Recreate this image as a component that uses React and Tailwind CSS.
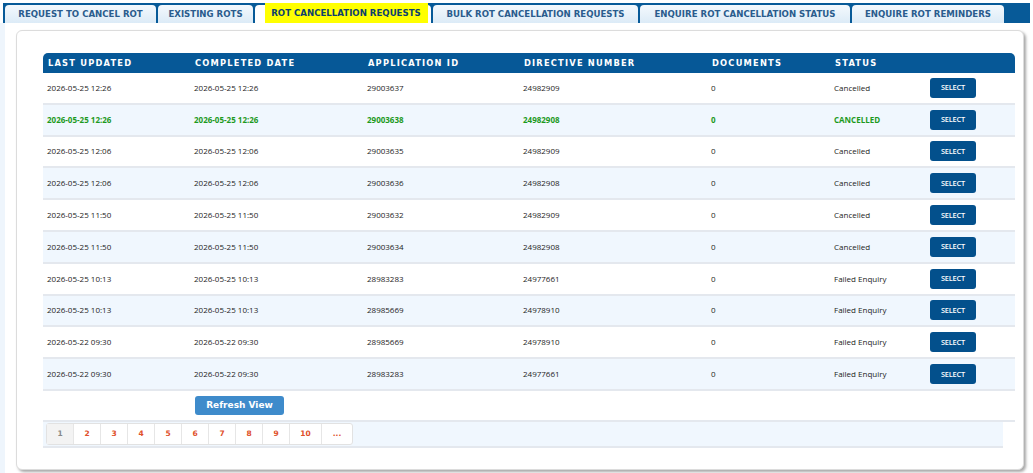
import React from "react";

const tabs = [
  { label: "REQUEST TO CANCEL ROT", w: "w-[151px]" },
  { label: "EXISTING ROTS", w: "w-[95px]" },
  { label: "ROT CANCELLATION REQUESTS", w: "w-[176px]", active: true },
  { label: "BULK ROT CANCELLATION REQUESTS", w: "w-[205px]" },
  { label: "ENQUIRE ROT CANCELLATION STATUS", w: "w-[210px]" },
  { label: "ENQUIRE ROT REMINDERS", w: "w-[152px]" },
];

const rows = [
  ["2026-05-25 12:26", "2026-05-25 12:26", "29003637", "24982909", "0", "Cancelled"],
  ["2026-05-25 12:26", "2026-05-25 12:26", "29003638", "24982908", "0", "CANCELLED", true],
  ["2026-05-25 12:06", "2026-05-25 12:06", "29003635", "24982909", "0", "Cancelled"],
  ["2026-05-25 12:06", "2026-05-25 12:06", "29003636", "24982908", "0", "Cancelled"],
  ["2026-05-25 11:50", "2026-05-25 11:50", "29003632", "24982909", "0", "Cancelled"],
  ["2026-05-25 11:50", "2026-05-25 11:50", "29003634", "24982908", "0", "Cancelled"],
  ["2026-05-25 10:13", "2026-05-25 10:13", "28983283", "24977661", "0", "Failed Enquiry"],
  ["2026-05-25 10:13", "2026-05-25 10:13", "28985669", "24978910", "0", "Failed Enquiry"],
  ["2026-05-22 09:30", "2026-05-22 09:30", "28985669", "24978910", "0", "Failed Enquiry"],
  ["2026-05-22 09:30", "2026-05-22 09:30", "28983283", "24977661", "0", "Failed Enquiry"],
];

const cols = ["w-[147px]", "w-[173px]", "w-[156px]", "w-[188px]", "w-[123px]", "w-[100px]"];
const heads = ["LAST UPDATED", "COMPLETED DATE", "APPLICATION ID", "DIRECTIVE NUMBER", "DOCUMENTS", "STATUS"];
const pages = ["1", "2", "3", "4", "5", "6", "7", "8", "9", "10", "..."];

export default function App() {
  return (
    <div className="w-[1033px] h-[473px] bg-white overflow-hidden font-['DejaVu_Sans',sans-serif]">
      {/* tab strip */}
      <div className="mt-[3px] ml-[3px] w-[1027px] h-[20px] bg-[#075a98] flex items-end gap-[2px] pl-[2px]">
        {tabs.map((t) => (
          <div
            key={t.label}
            className={`${t.w} h-[18px] rounded-t-[4px] flex items-center justify-center text-[8.6px] font-bold ${
              t.active ? "bg-white text-[#0d3f6e]" : "bg-gradient-to-b from-[#f4f9fd] to-[#dcebf7] text-[#2a5c8d]"
            }`}
          >
            <span className={t.active ? "bg-[#ffff00] w-[163px] ml-[6px] text-center leading-[20px] -mt-[2px]" : ""}>{t.label}</span>
          </div>
        ))}
      </div>

      <div className="flex">
        <div className="w-[5px] h-[450px] bg-[#eef5fc]" />
        {/* panel */}
        <div className="ml-[11px] mt-[7px] w-[1008px] h-[440px] rounded-[6px] border border-[#dcdcdc] shadow-[2px_2px_3px_rgba(0,0,0,0.35)] bg-white pt-[22px] pl-[26px]">
          <div className="w-[972px]">
            <div className="h-[20px] bg-[#065897] rounded-t-[5px] flex items-center text-white text-[8.3px] font-bold tracking-[1.2px]">
              {heads.map((h, i) => (
                <div key={h} className={`${cols[i]} pl-[5px]`}>{h}</div>
              ))}
            </div>
            {rows.map((r, idx) => {
              const green = r[6];
              return (
                <div
                  key={idx}
                  className={`h-[31.8px] flex items-center border-b-2 border-[#e4e8ee] text-[8px] ${
                    idx % 2 === 1 ? "bg-[#f0f7fe]" : "bg-white"
                  } ${green ? "text-[#1d9a1d] font-bold" : "text-[#1c1c1c] font-medium"}`}
                >
                  {r.slice(0, 6).map((c, i) => (
                    <div key={i} className={`${cols[i]} pl-[4px] font-['Open_Sans',sans-serif]`}>{c}</div>
                  ))}
                  <div className="w-[46px] h-[20px] rounded-[3px] bg-[#03508c] text-white text-[7.4px] flex items-center justify-center font-['Open_Sans',sans-serif] font-semibold tracking-[-0.2px]">
                    SELECT
                  </div>
                </div>
              );
            })}
            <div className="h-[31px] flex items-center border-b-2 border-[#e4e8ee]">
              <div className="ml-[152px] w-[89px] h-[19px] rounded-[3px] bg-[#3e8bcb] text-white text-[9px] font-bold flex items-center justify-center">
                Refresh View
              </div>
            </div>
            <div className="w-[960px] h-[26px] bg-[#f0f7fe] border-b-2 border-[#e4e8ee] flex items-center pl-[3px]">
              <div className="flex h-[22px] rounded-[3px] border border-[#e2e2e2] bg-white">
                {pages.map((p, i) => (
                  <div
                    key={p}
                    className={`h-full flex items-center justify-center text-[7.5px] font-bold border-r border-[#e6e6e6] last:border-r-0 ${
                      i === 0 ? "bg-[#f3f3f3] text-[#888]" : "text-[#e0502a]"
                    } ${p === "10" ? "w-[32px]" : p === "..." ? "w-[30px]" : "w-[27px]"}`}
                  >
                    {p}
                  </div>
                ))}
              </div>
            </div>
          </div>
        </div>
      </div>
    </div>
  );
}
